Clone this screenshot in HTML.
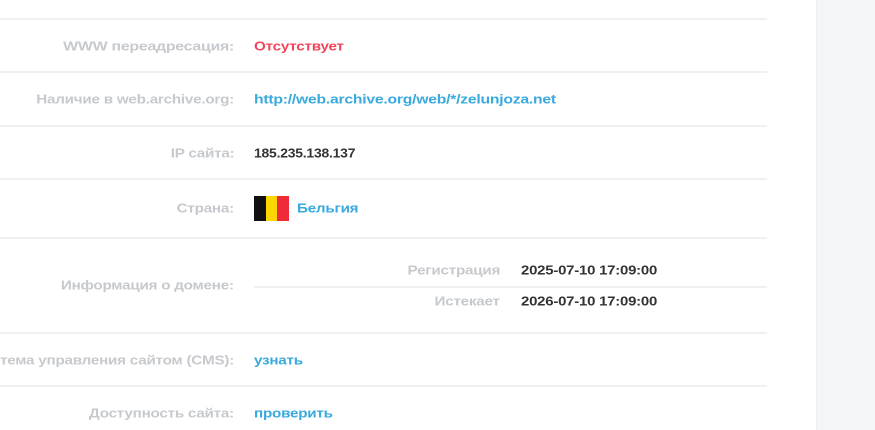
<!DOCTYPE html>
<html><head><meta charset="utf-8"><style>
*{margin:0;padding:0;box-sizing:border-box}
body{width:875px;height:430px;background:#fff;font-family:"Liberation Sans",sans-serif;font-weight:bold;font-size:13px;position:relative;overflow:hidden;letter-spacing:-0.2px}
.side{position:absolute;left:816px;top:0;width:59px;height:430px;background:#f4f5f7;border-left:1px solid #eceef0}
.hl{position:absolute;left:0;width:767px;height:2px;background:#eef0f1}
.lab{position:absolute;right:641px;color:#c6c9cd;white-space:nowrap;transform:translateY(-50%) scaleX(1.17);transform-origin:right center}
.val{position:absolute;left:254px;white-space:nowrap;transform:translateY(-50%) scaleX(1.17);transform-origin:left center}
.blue{color:#3aa9dd}.red{color:#f0455c}.dark{color:#333}
</style></head><body>
<div class="side"></div>
<div class="hl" style="top:18px"></div>
<div class="hl" style="top:71px"></div>
<div class="hl" style="top:125px"></div>
<div class="hl" style="top:178px"></div>
<div class="hl" style="top:237px"></div>
<div class="hl" style="top:332px"></div>
<div class="hl" style="top:385px"></div>
<div class="hl" style="top:286px;left:254px;width:513px"></div>

<div class="lab" style="top:46px;transform:translateY(-50%) scaleX(1.22)">WWW переадресация:</div>
<div class="val red" style="top:46px">Отсутствует</div>
<div class="lab" style="top:99px">Наличие в web.archive.org:</div>
<div class="val blue" style="top:99px;transform:translateY(-50%) scaleX(1.21)">http://web.archive.org/web/*/zelunjoza.net</div>
<div class="lab" style="top:153px">IP сайта:</div>
<div class="val dark" style="top:153px;transform:translateY(-50%) scaleX(1.07)">185.235.138.137</div>
<div class="lab" style="top:208px">Страна:</div>
<div style="position:absolute;left:254px;top:196px;width:35px;height:25px;display:flex">
<div style="flex:1;background:#111"></div><div style="flex:1;background:#fdd600"></div><div style="flex:1;background:#ef2b3a"></div></div>
<div class="val blue" style="top:208px;left:297px">Бельгия</div>
<div class="lab" style="top:285px">Информация о домене:</div>
<div class="lab" style="top:270px;right:375px">Регистрация</div>
<div class="val dark" style="top:270px;left:521px;transform:translateY(-50%) scaleX(1.15)">2025-07-10 17:09:00</div>
<div class="lab" style="top:301px;right:375px">Истекает</div>
<div class="val dark" style="top:301px;left:521px;transform:translateY(-50%) scaleX(1.15)">2026-07-10 17:09:00</div>
<div class="lab" style="top:360px">Система управления сайтом (CMS):</div>
<div class="val blue" style="top:360px">узнать</div>
<div class="lab" style="top:413px">Доступность сайта:</div>
<div class="val blue" style="top:413px">проверить</div>
</body></html>
